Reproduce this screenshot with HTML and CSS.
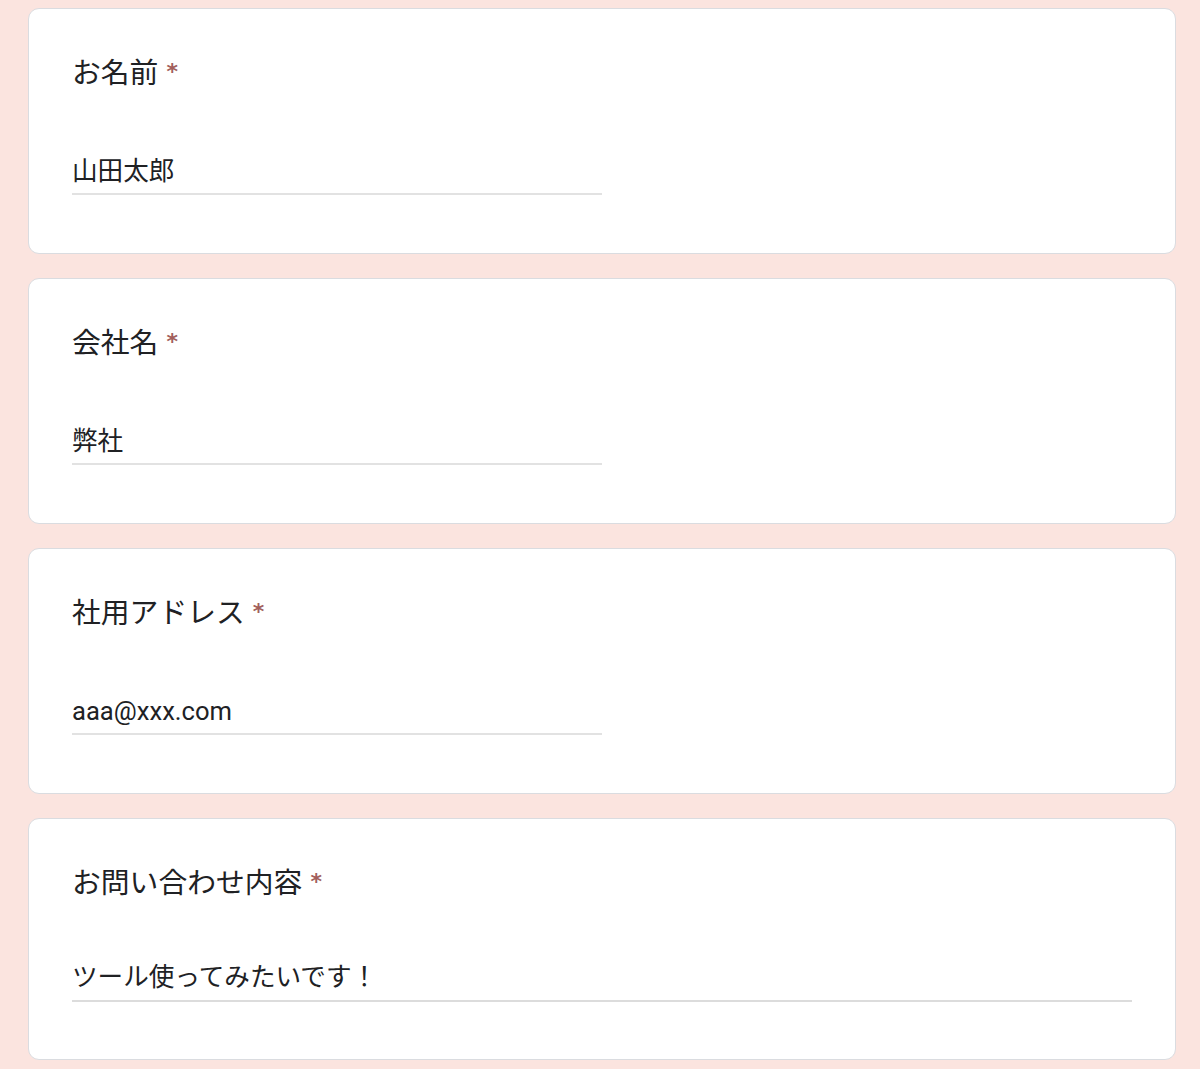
FILE: index.html
```html
<!DOCTYPE html>
<html lang="ja">
<head>
<meta charset="utf-8">
<title>フォーム</title>
<link rel="stylesheet" href="styles.css">
</head>
<body>
<main class="form">
  <section class="card">
    <div class="question">お名前<span class="req">*</span></div>
    <div class="answer short">山田太郎</div>
  </section>
  <section class="card">
    <div class="question">会社名<span class="req">*</span></div>
    <div class="answer short">弊社</div>
  </section>
  <section class="card">
    <div class="question">社用アドレス<span class="req">*</span></div>
    <div class="answer short">aaa@xxx.com</div>
  </section>
  <section class="card card-long">
    <div class="question">お問い合わせ内容<span class="req">*</span></div>
    <div class="answer long">ツール使ってみたいです！</div>
  </section>
</main>
</body>
</html>
```

FILE: styles.css
```css
html, body {
  margin: 0;
  padding: 0;
  background: #fbe4df;
}

body {
  font-family: Roboto, "Noto Sans CJK JP", sans-serif;
  color: #202124;
}

.form {
  display: flex;
  flex-direction: column;
  gap: 24px;
  padding: 8px 24px 0 28px;
}

.card {
  background: #ffffff;
  border: 1px solid #dadce0;
  border-radius: 11px;
  padding: 42px 43px 58px;
}

.question {
  font-family: "Noto Sans CJK JP", sans-serif;
  font-size: 28.8px;
  line-height: 40px;
  height: 40px;
  color: #202124;
}

.req {
  color: #a25f5c;
  font-family: "DejaVu Sans", sans-serif;
  font-size: 22px;
  font-weight: bold;
  margin-left: 8px;
  position: relative;
  top: -4px;
}

.answer {
  margin-top: 62px;
  font-size: 25.6px;
  line-height: 36px;
  height: 36px;
  padding-bottom: 4px;
  border-bottom: 2px solid #e2e2e2;
  color: #202124;
}

.short {
  width: 530px;
}

.card-long {
  padding-bottom: 57px;
}

.long {
  margin-top: 58px;
  padding-bottom: 5px;
  border-bottom-color: #dcdcdc;
}
```
